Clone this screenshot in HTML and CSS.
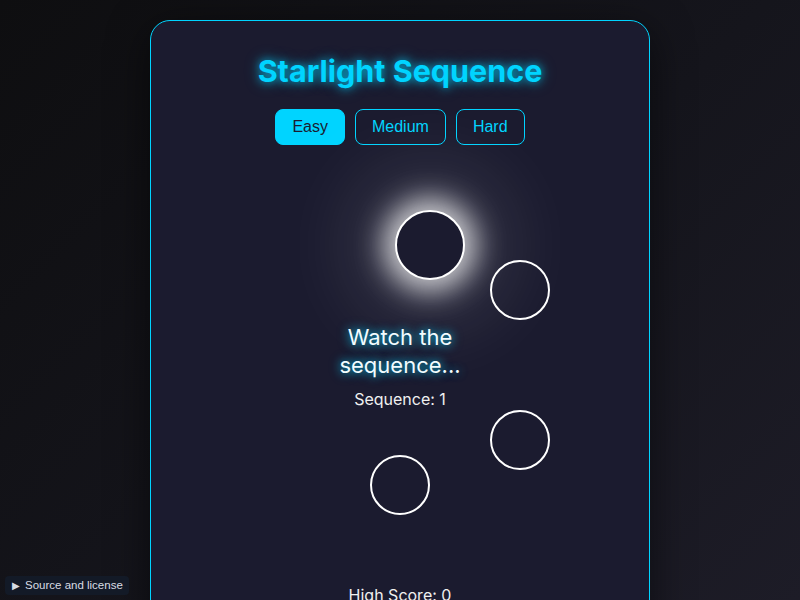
FILE: index.html
```html
<!DOCTYPE html>
<html lang="en">
<head>
<meta charset="utf-8">
<title>Starlight Sequence</title>
<link rel="stylesheet" href="styles.css">
</head>
<body>
<main class="card">
  <h1 class="title">Starlight Sequence</h1>
  <div class="levels">
    <button class="level active">Easy</button>
    <button class="level">Medium</button>
    <button class="level">Hard</button>
  </div>
  <div class="sky">
    <div class="star lit s1"></div>
    <div class="star s2"></div>
    <div class="star s3"></div>
    <div class="star s4"></div>
    <div class="status">
      <p class="message">Watch the sequence...</p>
      <p class="seq">Sequence: 1</p>
    </div>
  </div>
  <p class="score">High Score: 0</p>
</main>
<div class="source"><span class="tri">&#9654;</span>Source and license</div>
</body>
</html>
```
FILE: styles.css
```css
* { box-sizing: border-box; }
html, body { height: 100%; }
body {
  margin: 0;
  font-family: Inter, "Noto Sans", sans-serif;
  background: linear-gradient(135deg, #0e0e10 0%, #15151c 55%, #1d1c27 100%);
  display: flex;
  justify-content: center;
  align-items: flex-start;
  overflow: hidden;
  color: #fff;
}
.card {
  margin-top: 20px;
  width: 500px;
  min-height: 640px;
  background: #1b1b2f;
  border: 1px solid #00d4ff;
  border-radius: 20px;
  padding: 30px 20px 20px;
  display: flex;
  flex-direction: column;
  align-items: center;
  box-shadow: 0 10px 40px rgba(0,0,0,0.55);
}
.title {
  margin: 0 0 18px;
  font-size: 30.5px;
  line-height: 40px;
  font-weight: 700;
  color: #00d4ff;
  text-shadow: 0 0 8px rgba(0,212,255,0.75), 0 0 16px rgba(0,212,255,0.4);
}
.levels {
  display: flex;
  gap: 10px;
}
.level {
  font-family: "Liberation Sans", Arial, sans-serif;
  font-size: 16px;
  line-height: 18px;
  padding: 8px 16px;
  border: 1px solid #00d4ff;
  border-radius: 8px;
  background: transparent;
  color: #00d4ff;
}
.level.active {
  background: #00d4ff;
  color: #1b1b2f;
}
.sky {
  position: relative;
  margin-top: 20px;
  width: 300px;
  height: 400px;
}
.star {
  position: absolute;
  width: 60px;
  height: 60px;
  border: 2px solid #fff;
  border-radius: 50%;
}
.star.lit {
  width: 70px;
  height: 70px;
  background: #1b1b2f;
  box-shadow: 0 0 28px 12px rgba(255,255,255,0.72), 0 0 90px 30px rgba(255,255,255,0.2);
}
.s1 { left: 145px; top: 45px; }
.s2 { left: 240px; top: 95px; }
.s3 { left: 240px; top: 245px; }
.s4 { left: 120px; top: 290px; }
.status {
  position: absolute;
  left: 50%;
  top: 50%;
  transform: translate(-50%, calc(-50% + 1px));
  width: 160px;
  text-align: center;
}
.message {
  margin: 0 0 10px;
  font-size: 22px;
  line-height: 28px;
  color: #f2fcff;
  text-shadow: 0 0 8px rgba(0,212,255,0.8), 0 0 14px rgba(0,212,255,0.4);
}
.seq {
  margin: 0;
  font-size: 16px;
  line-height: 20px;
  color: #f0f0f0;
}
.score {
  margin: 20px 0 0;
  font-size: 16px;
  line-height: 20px;
  color: #f0f0f0;
}
.source {
  position: fixed;
  left: 5px;
  bottom: 5px;
  padding: 3px 6px 3px 7px;
  background: #131a27;
  border-radius: 4px;
  font-family: "Liberation Sans", Arial, sans-serif;
  font-size: 11.5px;
  line-height: 13px;
  color: #d8dce4;
}
.tri {
  font-size: 10px;
  margin-right: 5px;
}
```
